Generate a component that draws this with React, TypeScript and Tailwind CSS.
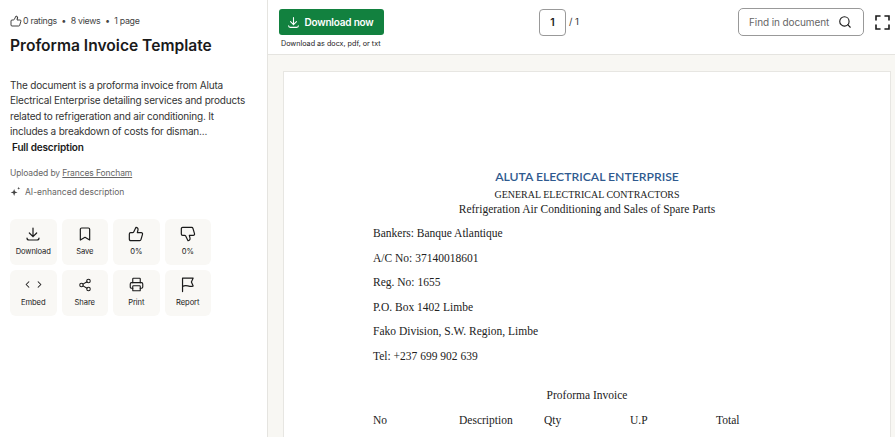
import { Bookmark, ChevronLeft, ChevronRight, Printer, Search, Share2 } from "lucide-react";
import type { ReactNode } from "react";

function ActionTile({ icon, label }: { icon: ReactNode; label: string }) {
  return (
    <div className="flex h-[46px] w-full flex-col items-center rounded-md bg-[#f9f8f5] pt-[6px]">
      <div className="flex h-[18px] items-center justify-center text-[#1a1a1a]">{icon}</div>
      <span className="mt-[4px] text-[7.6px] leading-[10px] tracking-[-0.1px] text-[#222]">{label}</span>
    </div>
  );
}

function DownloadIcon({ size = 16, width = 1.8 }: { size?: number; width?: number }) {
  return (
    <svg width={size} height={size} viewBox="0 0 24 24" fill="none" stroke="currentColor" strokeWidth={width} strokeLinecap="round" strokeLinejoin="round">
      <path d="M12 3v13M6.5 10.5 12 16l5.5-5.5" />
      <path d="M3 18c0 1.8 1.2 3 3 3h12c1.800 0 3-1.200 3-3" />
    </svg>
  );
}

function ThumbIcon({ size = 16, width = 1.8, className }: { size?: number; width?: number; className?: string }) {
  return (
    <svg width={size} height={size} viewBox="0 0 24 24" fill="none" stroke="currentColor" strokeWidth={width} strokeLinecap="round" strokeLinejoin="round" className={className}>
      <path d="M15 5.88 14 10h5.83a2 2 0 0 1 1.92 2.56l-2.33 8A2 2 0 0 1 17.5 22H4a2 2 0 0 1-2-2v-8a2 2 0 0 1 2-2h2.76a2 2 0 0 0 1.79-1.11L12 2a3.13 3.13 0 0 1 3 3.88Z" />
    </svg>
  );
}

function FlagIcon() {
  return (
    <svg width="17" height="17" viewBox="0 0 24 24" fill="none" stroke="currentColor" strokeWidth="1.7" strokeLinecap="round" strokeLinejoin="round">
      <path d="M5 22V3h15l-2.500 5.500L20 14c-3 1.500-5 .5-7.500 0S7 13.500 5 15" />
    </svg>
  );
}

function SparkIcon() {
  return (
    <svg width="11" height="11" viewBox="0 0 12 12" fill="#444">
      <path d="M4.500 3.200 5.500 6l2.800 1-2.800 1-1 2.800-1-2.800L.7 7l2.800-1z" />
      <path d="M9.500.8l.45 1.250 1.250.45-1.250.45-.45 1.250-.45-1.250L7.800 2.500l1.250-.45z" />
    </svg>
  );
}

function EmbedIcon() {
  return (
    <span className="flex gap-[1px]">
      <ChevronLeft size={11} strokeWidth={2.2} />
      <ChevronRight size={11} strokeWidth={2.2} />
    </span>
  );
}

function FullscreenIcon() {
  return (
    <svg width="15" height="15" viewBox="0 0 15 15" fill="none" stroke="#1a1a1a" strokeWidth="1.6" strokeLinecap="round">
      <path d="M1 5V1h4M10 1h4v4M14 10v4h-4M5 14H1v-4" />
    </svg>
  );
}

export default function App() {
  const line = "mb-[10.5px] text-[11.5px] leading-[14px]";
  return (
    <div className="flex h-[437px] w-[895px] overflow-hidden bg-white font-['Inter',sans-serif]">
      {/* Sidebar */}
      <aside className="w-[268px] shrink-0 border-r border-[#e5e4e0] pl-[10px] pt-[14px]">
        <div className="flex items-center text-[8.8px] leading-[14px] tracking-[-0.3px] text-[#444]">
          <ThumbIcon size={12} width={1.7} className="mr-[1px] text-[#222]" />
          <span>0 ratings</span>
          <span className="mx-[5px] font-bold">•</span>
          <span>8 views</span>
          <span className="mx-[5px] font-bold">•</span>
          <span>1 page</span>
        </div>
        <h1 className="mt-[7px] text-[15.6px] font-semibold leading-[22px] text-[#1a1a1a]">Proforma Invoice Template</h1>
        <p className="mt-[21px] w-[240px] text-[10px] leading-[15.4px] tracking-[-0.2px] text-[#333]">
          The document is a proforma invoice from Aluta Electrical Enterprise detailing services and products related to
          refrigeration and air conditioning. It includes a breakdown of costs for disman...
        </p>
        <div className="ml-[2px] text-[10px] font-semibold leading-[15px] tracking-[-0.15px] text-[#1a1a1a]">Full description</div>
        <div className="mt-[12px] text-[8.5px] leading-[12px] tracking-[-0.1px] text-[#666]">
          Uploaded by <span className="underline">Frances Foncham</span>
        </div>
        <div className="mt-[7px] flex items-center text-[8.5px] leading-[12px] text-[#666]">
          <span className="mr-[4px]">
            <SparkIcon />
          </span>
          AI-enhanced description
        </div>
        <div className="mt-[21px] grid w-[201px] grid-cols-4 gap-[5px]">
          <ActionTile icon={<DownloadIcon />} label="Download" />
          <ActionTile icon={<Bookmark size={16} strokeWidth={1.8} />} label="Save" />
          <ActionTile icon={<ThumbIcon />} label="0%" />
          <ActionTile icon={<ThumbIcon className="-scale-y-100" />} label="0%" />
          <ActionTile icon={<EmbedIcon />} label="Embed" />
          <ActionTile icon={<Share2 size={14} strokeWidth={1.8} />} label="Share" />
          <ActionTile icon={<Printer size={15} strokeWidth={1.8} />} label="Print" />
          <ActionTile icon={<FlagIcon />} label="Report" />
        </div>
      </aside>

      <main className="flex min-w-0 flex-1 flex-col bg-[#f8f7f3]">
        {/* Toolbar */}
        <header className="relative flex h-[55px] shrink-0 justify-between border-b border-[#e5e4e0] bg-white pl-[11px] pr-[5px]">
          <div className="pt-[9px]">
            <div className="flex h-[26px] w-[105px] items-center justify-center gap-[4px] rounded-[3px] bg-[#12813f] pr-[2px] text-[10px] font-semibold tracking-[-0.2px] text-white">
              <DownloadIcon size={13} width={2} />
              Download now
            </div>
            <div className="ml-[2px] mt-[4px] text-[7.2px] leading-[10px] text-[#222]">Download as docx, pdf, or txt</div>
          </div>
          <div className="absolute left-[271px] top-[9px] flex items-center">
            <div className="flex h-[27px] w-[27px] items-center justify-center rounded-[4px] border border-[#999] text-[10.5px] font-semibold text-[#1a1a1a]">
              1
            </div>
            <span className="ml-[3px] text-[9.5px] text-[#333]">/ 1</span>
          </div>
          <div className="flex items-start gap-[11px] pt-[8px]">
            <div className="flex h-[28px] w-[126px] items-center justify-between rounded-[5px] border border-[#999] pl-[10px] pr-[11px] text-[10px] tracking-[-0.1px] text-[#666]">
              Find in document
              <Search size={14} strokeWidth={1.9} className="text-[#1a1a1a]" />
            </div>
            <div className="pt-[7px]">
              <FullscreenIcon />
            </div>
          </div>
        </header>

        {/* Document page */}
        <div className="ml-[15px] mr-[4px] mt-[16px] h-[500px] shrink-0 border border-[#e7e6e2] bg-white pl-[89px] pt-[96px] font-['Liberation_Serif',serif] text-[#222]">
          <div className="w-[428px] text-center">
            <div className="font-['Lato',sans-serif] text-[12.2px] font-semibold leading-[18px] text-[#2f5a8f]">
              ALUTA ELECTRICAL ENTERPRISE
            </div>
            <div className="mt-[1px] text-[10px] leading-[15px]">GENERAL ELECTRICAL CONTRACTORS</div>
            <div className="text-[11.5px] leading-[15px]">Refrigeration Air Conditioning and Sales of Spare Parts</div>
          </div>
          <div className="mt-[9px]">
            <div className={line}>Bankers: Banque Atlantique</div>
            <div className={line}>A/C No: 37140018601</div>
            <div className={line}>Reg. No: 1655</div>
            <div className={line}>P.O. Box 1402 Limbe</div>
            <div className={line}>Fako Division, S.W. Region, Limbe</div>
            <div className={line}>Tel: +237 699 902 639</div>
          </div>
          <div className="mt-[25px] w-[428px] text-center text-[11.5px] leading-[14px]">Proforma Invoice</div>
          <div className="mt-[11px] grid w-[380px] grid-cols-[86px_85px_86px_86px_1fr] text-[11.5px] leading-[14px]">
            <span>No</span>
            <span>Description</span>
            <span>Qty</span>
            <span>U.P</span>
            <span>Total</span>
          </div>
        </div>
      </main>
    </div>
  );
}
